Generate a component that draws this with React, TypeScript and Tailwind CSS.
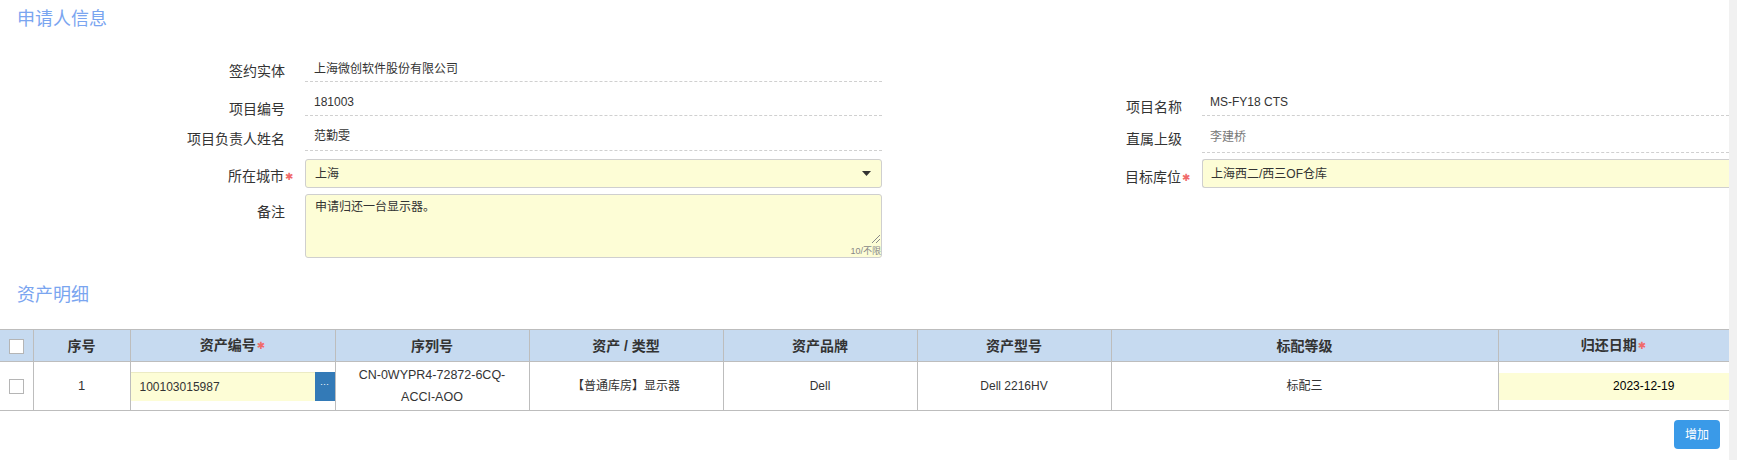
import React from "react";

const Star = () => (
  <span className="inline-block w-0 whitespace-nowrap pl-[1px] text-[10px] align-[1px] text-[#f06a6a] font-['DejaVu_Sans',sans-serif]">
    ✱
  </span>
);

const Checkbox = () => (
  <span className="inline-block w-[15px] h-[15px] border border-[#b5b5b5] bg-white align-middle" />
);

const headers = [
  { label: "序号" },
  { label: "资产编号", required: true },
  { label: "序列号" },
  { label: "资产 / 类型" },
  { label: "资产品牌" },
  { label: "资产型号" },
  { label: "标配等级" },
  { label: "归还日期", required: true },
];

const widths = [33, 97, 205, 194, 194, 194, 194, 387, 231];

export default function App() {
  return (
    <div className="w-[1737px] h-[460px] flex bg-white overflow-hidden font-['Liberation_Sans','Noto_Sans_CJK_SC',sans-serif] text-[#333]">
      <div className="flex-1 min-w-0">
        {/* 申请人信息 */}
        <div className="pt-[9px] pl-[17px] text-[18px] leading-[20px] text-[#7aa5f0]">
          申请人信息
        </div>

        <div className="mt-[19px]">
          <div className="flex h-[34px]">
            <div className="w-[285px] shrink-0 text-right pt-[13px] text-[14px] leading-[20px]">
              签约实体
            </div>
            <div className="ml-[20px] w-[577px] border-b border-dashed border-[#d0d0d0] pt-[13px] pl-[9px] text-[12px] leading-[16px]">
              上海微创软件股份有限公司
            </div>
          </div>

          <div className="flex h-[34px]">
            <div className="w-[285px] shrink-0 text-right pt-[17px] text-[14px] leading-[20px]">
              项目编号
            </div>
            <div className="ml-[20px] w-[577px] border-b border-dashed border-[#d0d0d0] pt-[12px] pl-[9px] text-[12px] leading-[16px]">
              181003
            </div>
            <div className="w-[300px] shrink-0 text-right pt-[15px] text-[14px] leading-[20px]">
              项目名称
            </div>
            <div className="ml-[20px] flex-1 border-b border-dashed border-[#d0d0d0] pt-[12px] pl-[8px] text-[12px] leading-[16px]">
              MS-FY18 CTS
            </div>
          </div>

          <div className="flex h-[35px]">
            <div className="w-[285px] shrink-0 text-right pt-[13px] text-[14px] leading-[20px]">
              项目负责人姓名
            </div>
            <div className="ml-[20px] w-[577px] border-b border-dashed border-[#d0d0d0] pt-[12px] pl-[9px] text-[12px] leading-[16px]">
              范勤雯
            </div>
            <div className="w-[300px] shrink-0 text-right pt-[13px] text-[14px] leading-[20px]">
              直属上级
            </div>
            <div className="ml-[20px] flex-1 pt-[13px] text-[12px] leading-[16px] text-[#777]">
              <div className="pb-[7px] pl-[8px] border-b border-dashed border-[#d0d0d0]">
                李建桥
              </div>
            </div>
          </div>

          <div className="flex h-[29px] mt-[8px]">
            <div className="w-[285px] shrink-0 text-right pt-[7px] text-[14px] leading-[20px]">
              所在城市
              <Star />
            </div>
            <div className="ml-[20px] w-[577px] flex items-center justify-between rounded-[3px] border border-[#cfcfcf] bg-[#fdfdd6] pl-[9px] pr-[10px] text-[12px] leading-[16px]">
              <span>上海</span>
              <svg width="9" height="5" viewBox="0 0 9 5">
                <path d="M0 0 L9 0 L4.5 5 Z" fill="#333" />
              </svg>
            </div>
            <div className="w-[300px] shrink-0 text-right pt-[8px] text-[14px] leading-[20px]">
              目标库位
              <Star />
            </div>
            <div className="ml-[20px] flex-1 flex items-center rounded-l-[3px] border border-r-0 border-[#cfcfcf] bg-[#fdfdd6] pl-[8px] text-[12px] leading-[16px]">
              上海西二/西三OF仓库
            </div>
          </div>

          <div className="flex mt-[6px]">
            <div className="w-[285px] shrink-0 text-right pt-[8px] text-[14px] leading-[20px]">
              备注
            </div>
            <div className="relative ml-[20px] w-[577px] h-[64px] rounded-[3px] border border-[#cfcfcf] bg-[#fdfdd6] pl-[9px] pt-[4px] text-[12px] leading-[16px]">
              申请归还一台显示器。
              <svg
                className="absolute right-[1px] bottom-[14px]"
                width="9"
                height="8"
                viewBox="0 0 9 8"
              >
                <path d="M1 8 L9 0 M5 8 L9 4" stroke="#888" strokeWidth="1" />
              </svg>
              <span className="absolute right-0 bottom-0 text-[9px] leading-[11px] text-[#888]">
                10/不限
              </span>
            </div>
          </div>
        </div>

        {/* 资产明细 */}
        <div className="mt-[27px] pl-[17px] text-[18px] leading-[20px] text-[#7aa5f0]">
          资产明细
        </div>

        <table className="mt-[24px] w-full table-fixed border-collapse text-[12px]">
          <colgroup>
            {widths.map((w, i) => (
              <col key={i} style={{ width: w }} />
            ))}
          </colgroup>
          <thead>
            <tr className="h-[32px] bg-[#c6daf0]">
              <th className="border border-l-0 border-[#bdbdbd] text-center">
                <Checkbox />
              </th>
              {headers.map((h) => (
                <th
                  key={h.label}
                  className="border border-[#bdbdbd] text-center text-[14px] font-bold leading-[20px] text-[#333]"
                >
                  {h.label}
                  {h.required && (
                    <span className="pl-[1px] text-[10px] font-normal align-[1px] text-[#f06a6a] font-['DejaVu_Sans',sans-serif]">
                      ✱
                    </span>
                  )}
                </th>
              ))}
            </tr>
          </thead>
          <tbody>
            <tr className="h-[49px]">
              <td className="border border-l-0 border-[#bdbdbd] text-center">
                <Checkbox />
              </td>
              <td className="border border-[#bdbdbd] text-center text-[13px]">1</td>
              <td className="border border-[#bdbdbd] p-0">
                <div className="flex h-[29px]">
                  <div className="flex-1 flex items-center bg-[#fdfdd6] border-t border-[#ecebc4] pl-[9px] text-[12px]">
                    100103015987
                  </div>
                  <div className="w-[20px] flex items-center justify-center bg-[#337ab7] text-white text-[9px] leading-none pb-[4px]">
                    ···
                  </div>
                </div>
              </td>
              <td className="border border-[#bdbdbd] text-center text-[12.5px] leading-[22px]">
                CN-0WYPR4-72872-6CQ-
                <br />
                ACCI-AOO
              </td>
              <td className="border border-[#bdbdbd] text-center">【普通库房】显示器</td>
              <td className="border border-[#bdbdbd] text-center">Dell</td>
              <td className="border border-[#bdbdbd] text-center">Dell 2216HV</td>
              <td className="border border-[#bdbdbd] text-center">标配三</td>
              <td className="border border-r-0 border-[#bdbdbd] p-0">
                <div className="h-[27px] flex items-center justify-center bg-[#fdfdd6] pl-[60px] text-[12px] text-black">
                  2023-12-19
                </div>
              </td>
            </tr>
          </tbody>
        </table>

        <div className="flex justify-end mt-[9px] pr-[9px]">
          <button className="w-[46px] h-[29px] rounded-[4px] bg-[#3a9ae8] text-white text-[12px]">
            增加
          </button>
        </div>
      </div>
      <div className="w-[8px] shrink-0 bg-[#f1f1f1]" />
    </div>
  );
}
